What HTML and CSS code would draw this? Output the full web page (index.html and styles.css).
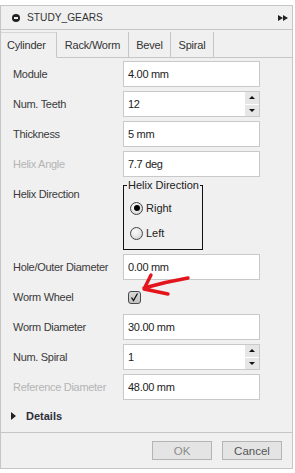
FILE: index.html
```html
<!DOCTYPE html>
<html>
<head>
<meta charset="utf-8">
<link rel="stylesheet" href="styles.css">
</head>
<body>
<div class="dialog">
  <div class="header">
    <span class="hicon"><span class="bar"></span></span>
    <span class="title">STUDY_GEARS</span>
    <svg class="ff" width="10" height="6" viewBox="0 0 10 6"><path d="M0 0 L5 3 L0 6 Z M5 0 L10 3 L5 6 Z" fill="#222"/></svg>
  </div>
  <div class="tabs">
    <div class="tab active t1">Cylinder</div>
    <div class="tab t2">Rack/Worm</div>
    <div class="tab t3">Bevel</div>
    <div class="tab t4">Spiral</div>
    <div class="tab-fill"></div>
  </div>
  <div class="body">
    <div class="row"><div class="label">Module</div><div class="input">4.00 mm</div></div>
    <div class="row"><div class="label">Num. Teeth</div><div class="input spin">12<div class="spinner"><span class="up"></span><span class="down"></span></div></div></div>
    <div class="row"><div class="label">Thickness</div><div class="input">5 mm</div></div>
    <div class="row"><div class="label disabled">Helix Angle</div><div class="input">7.7 deg</div></div>
    <div class="row group-row">
      <div class="label">Helix Direction</div>
      <div class="group">
        <div class="group-title">Helix Direction</div>
        <div class="radio-line first"><span class="radio checked"></span><span class="rtext">Right</span></div>
        <div class="radio-line"><span class="radio"></span><span class="rtext">Left</span></div>
      </div>
    </div>
    <div class="row"><div class="label">Hole/Outer Diameter</div><div class="input">0.00 mm</div></div>
    <div class="row"><div class="label">Worm Wheel</div><div class="check-cell"><span class="checkbox"><svg width="11" height="11" viewBox="0 0 11 11"><path d="M2.5 5.5 L4.5 8.5 L8.5 1.5" fill="none" stroke="#111" stroke-width="1.3"/></svg></span></div></div>
    <div class="row"><div class="label">Worm Diameter</div><div class="input">30.00 mm</div></div>
    <div class="row"><div class="label">Num. Spiral</div><div class="input spin">1<div class="spinner"><span class="up"></span><span class="down"></span></div></div></div>
    <div class="row last"><div class="label disabled">Reference Diameter</div><div class="input">48.00 mm</div></div>
  </div>
  <div class="details"><span class="tri"></span><span class="dtext">Details</span></div>
  <div class="footer">
    <div class="btn ok">OK</div>
    <div class="btn">Cancel</div>
  </div>
</div>
<svg class="arrow" width="295" height="473" viewBox="0 0 295 473">
  <path d="M144 288 Q165 282 188 278 M151 275 L144 289 L168 294" fill="none" stroke="#e3141c" stroke-width="3.4" stroke-linecap="round" stroke-linejoin="round"/>
</svg>
</body>
</html>
```
FILE: styles.css
```css
* { box-sizing: border-box; }
html, body { margin: 0; padding: 0; background: #ffffff; }
body {
  font-family: "Liberation Sans", Arial, sans-serif;
  font-size: 11px;
  color: #333333;
  position: relative;
  width: 295px;
  height: 473px;
  overflow: hidden;
}
.dialog {
  margin-top: 5px;
  width: 293px;
  height: 464px;
  border: 1px solid #c6c6c6;
  background: #f0f0f0;
  display: flex;
  flex-direction: column;
}
.header {
  height: 24px;
  border-bottom: 1px solid #c6c6c6;
  display: flex;
  align-items: center;
  padding-left: 11px;
  flex: none;
}
.hicon {
  width: 8px;
  height: 8px;
  border-radius: 50%;
  background: #222;
  display: flex;
  align-items: center;
  justify-content: center;
}
.hicon .bar { width: 4px; height: 2px; background: #f0f0f0; }
.title {
  margin-left: 7px;
  font-size: 10.2px;
  color: #333;
  flex: 1;
}
.ff { margin-right: 4px; }
.tabs {
  height: 28px;
  flex: none;
  display: flex;
  padding-top: 2px;
}
.tab {
  height: 26px;
  border-bottom: 1px solid #c6c6c6;
  border-right: 1px solid #c6c6c6;
  display: flex;
  align-items: center;
  justify-content: center;
  letter-spacing: -0.2px;
  color: #333;
}
.tab.active {
  border-top: 1px solid #d6d6d6;
  border-bottom: 1px solid #f0f0f0;
  justify-content: flex-start;
  padding-left: 6px;
}
.t1 { width: 56px; }
.t2 { width: 72px; }
.t3 { width: 42px; }
.t4 { width: 43px; }
.tab-fill { flex: 1; height: 26px; border-bottom: 1px solid #c6c6c6; }
.body {
  flex: none;
  padding-top: 3px;
  display: flex;
  flex-direction: column;
  gap: 4px;
}
.row {
  height: 26px;
  display: flex;
  align-items: center;
}
.label {
  width: 122px;
  padding-left: 12px;
  letter-spacing: -0.3px;
  color: #3a3a3a;
}
.label.disabled { color: #b4b4b4; }
.input {
  width: 137px;
  height: 26px;
  background: #fff;
  border: 1px solid #c9c9c9;
  padding-left: 4px;
  display: flex;
  align-items: center;
  letter-spacing: -0.3px;
  color: #222;
  position: relative;
}
.spinner {
  position: absolute;
  right: 0;
  top: 0;
  width: 14px;
  height: 24px;
  display: flex;
  flex-direction: column;
  gap: 1px;
}
.spinner span {
  flex: 1;
  background: #e6e6e6;
  display: flex;
  align-items: center;
  justify-content: center;
}
.spinner span::after {
  content: "";
  width: 0;
  height: 0;
  border-left: 3px solid transparent;
  border-right: 3px solid transparent;
}
.spinner .up::after { border-bottom: 3px solid #111; }
.spinner .down::after { border-top: 3px solid #111; }
.group-row {
  height: 69px;
  align-items: flex-start;
}
.group-row .label { padding-top: 7px; }
.group {
  margin-top: 4px;
  width: 80px;
  height: 65px;
  border: 1px solid #111;
  position: relative;
  padding-left: 6px;
  padding-top: 15px;
}
.group-title {
  position: absolute;
  left: 3px;
  top: -7px;
  background: #f0f0f0;
  padding: 0 1px;
  line-height: 13px;
  color: #222;
}
.radio-line {
  display: flex;
  align-items: center;
  height: 14px;
  margin-bottom: 11px;
}
.radio {
  width: 13px;
  height: 13px;
  border-radius: 50%;
  border: 1px solid #444;
  background: radial-gradient(circle at 40% 35%, #fafafa 0%, #e4e4e4 55%, #c4c4c4 100%);
  display: flex;
  align-items: center;
  justify-content: center;
}
.radio.checked::after {
  content: "";
  width: 6px;
  height: 6px;
  border-radius: 50%;
  background: #000;
}
.rtext { margin-left: 3px; color: #222; }
.check-cell { padding-left: 5px; display: flex; align-items: center; }
.checkbox {
  width: 13px;
  height: 13px;
  border: 1px solid #4a4a4a;
  border-radius: 3px;
  background: linear-gradient(#d8d8d8, #c2c2c2);
  display: flex;
  align-items: center;
  justify-content: center;
}
.details {
  height: 33px;
  flex: none;
  display: flex;
  align-items: center;
  padding-left: 10px;
  border-bottom: 1px solid #c6c6c6;
}
.tri {
  width: 0;
  height: 0;
  border-top: 4px solid transparent;
  border-bottom: 4px solid transparent;
  border-left: 5px solid #222;
}
.dtext {
  margin-left: 10px;
  font-weight: bold;
  color: #2e2e3a;
}
.footer {
  flex: 1;
  display: flex;
  justify-content: flex-end;
  align-items: flex-start;
  padding-top: 8px;
  padding-right: 10px;
  gap: 10px;
}
.btn {
  width: 60px;
  height: 19px;
  border: 1px solid #b4b4b4;
  background: #e4e4e4;
  display: flex;
  align-items: center;
  justify-content: center;
  font-size: 11.5px;
  color: #555;
}
.btn.ok { color: #8c8c8c; }
.arrow {
  position: absolute;
  left: 0;
  top: 0;
  pointer-events: none;
}
```
